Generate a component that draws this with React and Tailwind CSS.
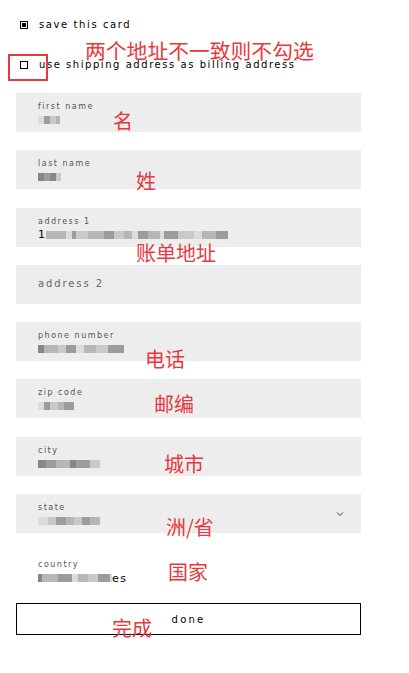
import React from "react";

const RED = "text-[#e8383d]";

function Mosaic({ cells, prefix, suffix }) {
  return (
    <div className="flex items-center h-[12px]">
      {prefix && <span className="text-[11px] text-black leading-none mr-[1px]">{prefix}</span>}
      {cells.map((c, i) => (
        <div key={i} className="h-[8px] blur-[0.6px]" style={{ width: c[0], background: c[1] }} />
      ))}
      {suffix && <span className="text-[11px] text-black leading-none tracking-[1.5px]">{suffix}</span>}
    </div>
  );
}

function Field({ label, cells, prefix, chevron, plain }) {
  return (
    <div className={`relative h-[39px] pl-[22px] pt-[9px] ${plain ? "" : "bg-[#ededed]"}`}>
      <div className="text-[8px] leading-[9px] tracking-[1.5px] text-[#555]">{label}</div>
      <div className="mt-[3px]">
        <Mosaic cells={cells} prefix={prefix} suffix={plain ? "es" : null} />
      </div>
      {chevron && (
        <svg className="absolute right-[17px] top-[17px]" width="8" height="6" viewBox="0 0 8 6">
          <path d="M1 1.5 L4 4.5 L7 1.5" fill="none" stroke="#444" strokeWidth="1" />
        </svg>
      )}
    </div>
  );
}

const g1 = "#c9c9cb", g2 = "#9a9ca0", g3 = "#b5b6b8", g4 = "#85878b", g5 = "#dcdcdd";

export default function App() {
  return (
    <div className="relative w-[409px] h-[673px] bg-white overflow-hidden" style={{ fontFamily: "'DejaVu Sans', 'Noto Sans CJK SC', sans-serif" }}>
      <div className="pt-[20px]">
        <div className="flex items-center h-[10px] pl-[20px]">
          <div className="w-[8px] h-[8px] border border-black flex items-center justify-center">
            <div className="w-[4px] h-[4px] bg-black" />
          </div>
          <span className="ml-[11px] text-[10px] tracking-[1.6px] text-black leading-none">save this card</span>
        </div>
        <div className="flex items-center h-[10px] pl-[20px] mt-[30px]">
          <div className="w-[8px] h-[8px] border border-black" />
          <span className="ml-[11px] text-[10px] tracking-[1.55px] text-black leading-none">use shipping address as billing address</span>
        </div>
      </div>

      <div className="mt-[23px] px-[16px] w-[377px] flex flex-col gap-[18.3px]">
        <Field label="first name" cells={[[6, g5], [6, g2], [6, g1], [4, g3]]} />
        <Field label="last name" cells={[[6, g4], [6, g2], [6, g4], [5, g1]]} />
        <Field label="address 1" prefix="1" cells={[[20, g3], [6, g5], [4, g2], [12, g1], [16, g3], [10, g2], [10, g1], [8, g3], [6, g5], [10, g2], [12, g3], [4, g5], [14, g2], [16, g1], [8, g5], [14, g3], [12, g2]]} />
        <div className="h-[39px] bg-[#ededed] pl-[22px] flex items-center">
          <span className="text-[10px] tracking-[1.9px] text-[#666] leading-none">address 2</span>
        </div>
        <Field label="phone number" cells={[[6, g4], [14, g3], [8, g1], [10, g2], [8, g5], [12, g3], [12, g1], [16, g2]]} />
        <Field label="zip code" cells={[[6, g5], [6, g2], [8, g1], [6, g3], [10, g2]]} />
        <Field label="city" cells={[[8, g4], [10, g2], [14, g3], [6, g4], [14, g2], [10, g1]]} />
        <Field label="state" chevron cells={[[10, g5], [8, g1], [10, g2], [8, g3], [8, g1], [8, g2], [10, g3]]} />
        <Field label="country" plain cells={[[4, g4], [16, g3], [14, g2], [6, g5], [10, g3], [10, g1], [12, g2], [2, g5]]} />
      </div>

      <div className="mx-[16px] mt-[13px] w-[345px] h-[32px] pt-[2px] border border-black flex items-center justify-center">
        <span className="text-[10px] tracking-[2.2px] text-black leading-none">done</span>
      </div>

      {/* annotations */}
      <div className="absolute left-[8px] top-[54px] w-[40px] h-[27px] border-2 border-[#e8383d]" />
      <div className={`absolute left-[85px] top-[40px] text-[20.8px] leading-none ${RED}`} style={{ fontFamily: "'Noto Sans CJK SC', sans-serif" }}>两个地址不一致则不勾选</div>
      {[
        ["名", 113, 111],
        ["姓", 136, 171],
        ["账单地址", 136, 243],
        ["电话", 145, 349],
        ["邮编", 154, 394],
        ["城市", 164, 454],
        ["洲/省", 166, 517],
        ["国家", 168, 562],
        ["完成", 112, 618],
      ].map(([t, x, y]) => (
        <div key={t} className={`absolute text-[20px] leading-none ${RED}`} style={{ left: x, top: y, fontFamily: "'Noto Sans CJK SC', sans-serif" }}>{t}</div>
      ))}
    </div>
  );
}
